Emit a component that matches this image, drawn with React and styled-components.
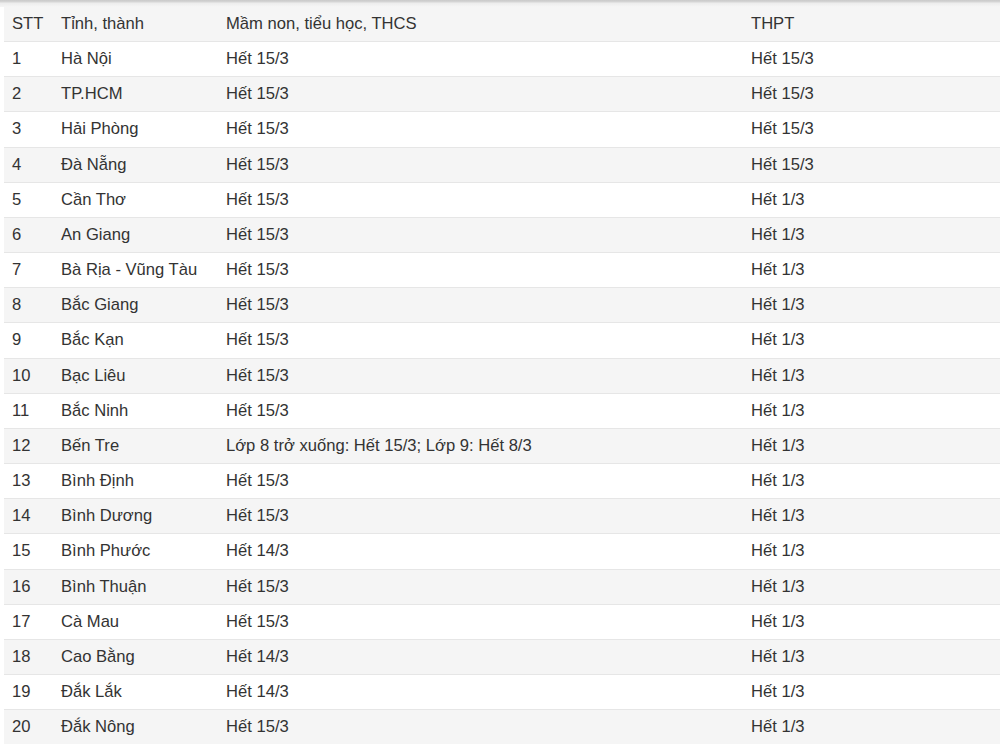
import React from "react";
import styled, {createGlobalStyle} from "styled-components";

const rows = [
    ["1", "Hà Nội", "Hết 15/3", "Hết 15/3"],
    ["2", "TP.HCM", "Hết 15/3", "Hết 15/3"],
    ["3", "Hải Phòng", "Hết 15/3", "Hết 15/3"],
    ["4", "Đà Nẵng", "Hết 15/3", "Hết 15/3"],
    ["5", "Cần Thơ", "Hết 15/3", "Hết 1/3"],
    ["6", "An Giang", "Hết 15/3", "Hết 1/3"],
    ["7", "Bà Rịa - Vũng Tàu", "Hết 15/3", "Hết 1/3"],
    ["8", "Bắc Giang", "Hết 15/3", "Hết 1/3"],
    ["9", "Bắc Kạn", "Hết 15/3", "Hết 1/3"],
    ["10", "Bạc Liêu", "Hết 15/3", "Hết 1/3"],
    ["11", "Bắc Ninh", "Hết 15/3", "Hết 1/3"],
    ["12", "Bến Tre", "Lớp 8 trở xuống: Hết 15/3; Lớp 9: Hết 8/3", "Hết 1/3"],
    ["13", "Bình Định", "Hết 15/3", "Hết 1/3"],
    ["14", "Bình Dương", "Hết 15/3", "Hết 1/3"],
    ["15", "Bình Phước", "Hết 14/3", "Hết 1/3"],
    ["16", "Bình Thuận", "Hết 15/3", "Hết 1/3"],
    ["17", "Cà Mau", "Hết 15/3", "Hết 1/3"],
    ["18", "Cao Bằng", "Hết 14/3", "Hết 1/3"],
    ["19", "Đắk Lắk", "Hết 14/3", "Hết 1/3"],
    ["20", "Đắk Nông", "Hết 15/3", "Hết 1/3"],
];

const GlobalStyle = createGlobalStyle`
  html, body {
    margin: 0;
    padding: 0;
    background: #fff;
  }
  body {
    font-family: "Liberation Sans", Arial, sans-serif;
    color: #333;
  }
`;

const Page = styled.div`
  width: 1000px;
  height: 746px;
  overflow: hidden;
  background: #fff;
`;

const TopShade = styled.div`
  height: 7px;
  background: linear-gradient(#c9c9c9 0, #d6d6d6 2px, #ececec 3px, #f6f6f6 7px);
`;

const Table = styled.table`
  margin-left: 4px;
  width: 996px;
  border-collapse: collapse;
  table-layout: fixed;
  font-size: 16.6px;
`;

const Row = styled.tr`
  background: ${p => (p.$striped ? "#f5f5f5" : "#fff")};
`;

const Cell = styled.td`
  padding: 8px;
  height: 18.15px;
  line-height: 18.15px;
  border-top: ${p => (p.$first ? "0" : "1px solid #e6e6e6")};
  white-space: nowrap;
  vertical-align: middle;
  text-align: left;
  font-weight: normal;
`;

const App = () => {
    return (
        <Page>
            <GlobalStyle/>
            <TopShade/>
            <Table>
                <colgroup>
                    <col style={{width: 49}}/>
                    <col style={{width: 165}}/>
                    <col style={{width: 525}}/>
                    <col/>
                </colgroup>
                <thead>
                <Row $striped>
                    <Cell as="th" $first>STT</Cell>
                    <Cell as="th" $first>Tỉnh, thành</Cell>
                    <Cell as="th" $first>Mầm non, tiểu học, THCS</Cell>
                    <Cell as="th" $first>THPT</Cell>
                </Row>
                </thead>
                <tbody>
                {rows.map((r, i) => (
                    <Row key={r[0]} $striped={i % 2 === 1}>
                        {r.map((c, j) => <Cell key={j}>{c}</Cell>)}
                    </Row>
                ))}
                </tbody>
            </Table>
        </Page>
    );
}

export default App;
